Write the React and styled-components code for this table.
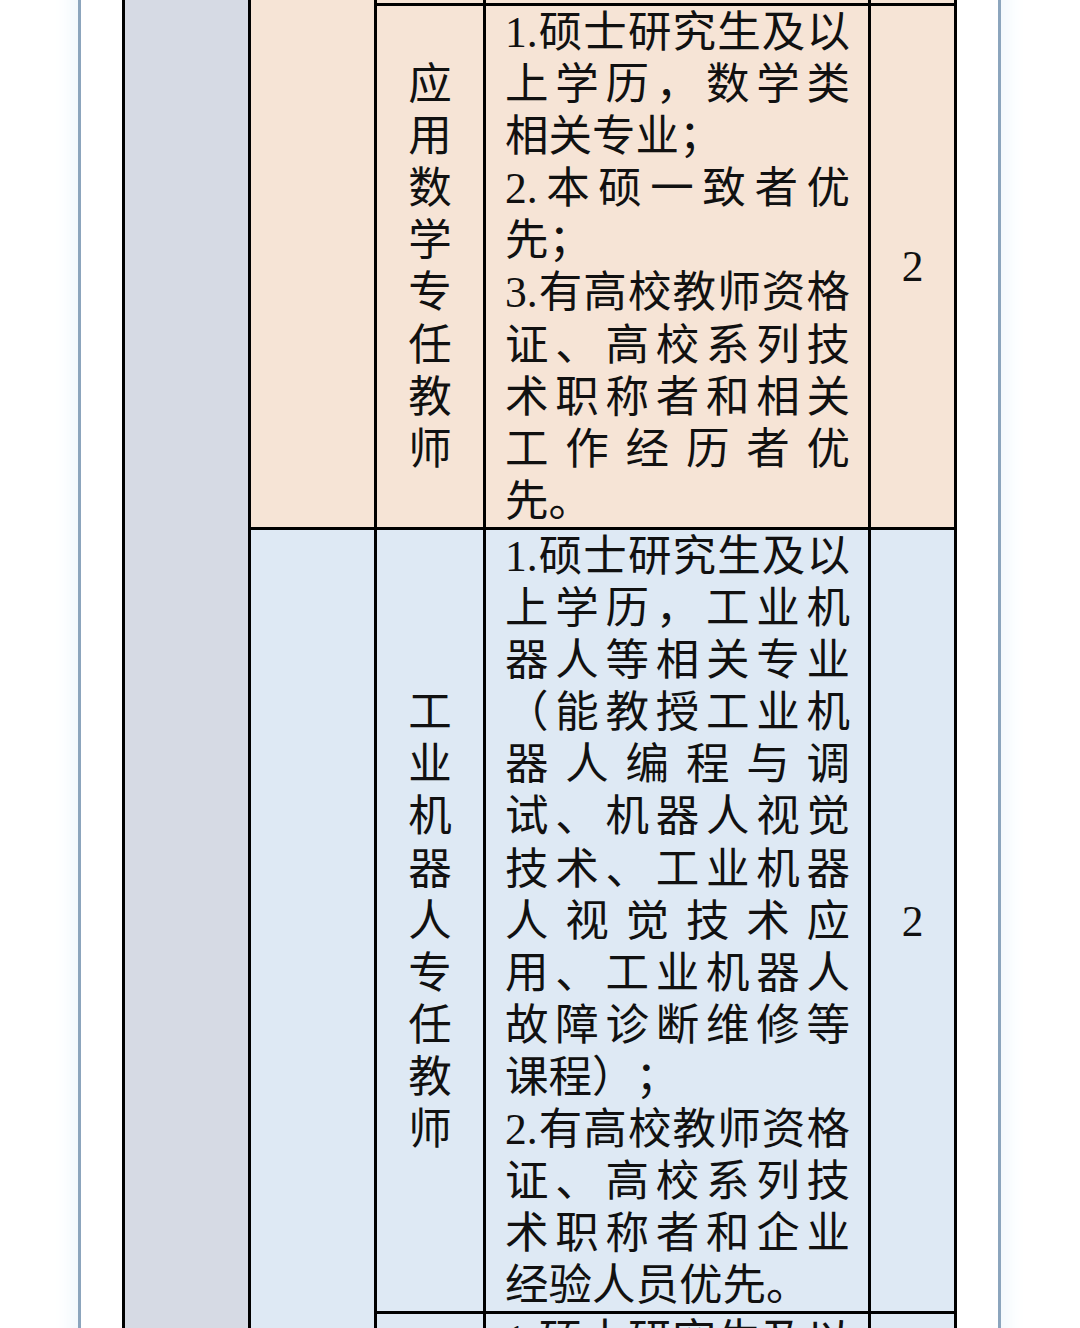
import React from 'react';
import styled, {createGlobalStyle} from 'styled-components';

const GlobalStyle = createGlobalStyle`
  html, body {
    margin: 0;
    padding: 0;
    background: #ffffff;
  }
  body {
    height: 1328px;
    overflow: hidden;
    font-family: "Liberation Serif", "Noto Sans CJK SC", serif;
    color: #111111;
  }
`;

const tones = {
  peach: '#f6e4d6',
  sky: '#dee9f4',
};

const Page = styled.div`
  height: 1328px;
  overflow: hidden;
  background: #ffffff;
`;

const Frame = styled.div`
  box-sizing: border-box;
  margin-left: 78px;
  width: 923px;
  min-height: 1400px;
  padding-left: 41px;
  border-left: 3px solid #8ca5bd;
  border-right: 3px solid #8ca5bd;
  background: #ffffff;
  box-shadow: 0 0 18px 8px #f1f8fd;
`;

const Sheet = styled.div`
  display: grid;
  grid-template-columns: 123px 123px 106px 382px 83px;
  gap: 3px;
  padding: 3px;
  margin-top: -40px;
  width: max-content;
  background: #000000;
  font-size: 43.5px;
  line-height: 52.1px;
`;

const SideCell = styled.div`
  grid-column: 1;
  grid-row: 1 / span 4;
  background: #d6dae4;
`;

const DeptCell = styled.div`
  grid-column: 2;
  grid-row: ${p => p.$row} / span 2;
  background: ${p => tones[p.$tone]};
`;

const BaseCell = styled.div`
  grid-row: ${p => p.$row};
  background: ${p => tones[p.$tone]};
  min-height: ${p => (p.$spacer ? '40px' : '0')};
`;

const TitleCell = styled(BaseCell)`
  grid-column: 3;
  display: flex;
  align-items: center;
  justify-content: center;
`;

const TitleText = styled.span`
  display: inline-block;
  width: 1em;
  text-align: center;
  word-break: break-all;
`;

const ReqCell = styled(BaseCell)`
  grid-column: 4;
  padding: 0 18px 0 19px;
  text-align: justify;
  text-spacing-trim: space-all;
`;

const Para = styled.p`
  margin: 0;
`;

const CountCell = styled(BaseCell)`
  grid-column: 5;
  display: flex;
  align-items: center;
  justify-content: center;
`;

const rows = [
  {tone: 'peach', spacer: true, title: '', reqs: [], count: ''},
  {
    tone: 'peach',
    title: '应用数学专任教师',
    reqs: [
      '1.硕士研究生及以上学历，数学类相关专业；',
      '2.本硕一致者优先；',
      '3.有高校教师资格证、高校系列技术职称者和相关工作经历者优先。',
    ],
    count: '2',
  },
  {
    tone: 'sky',
    title: '工业机器人专任教师',
    reqs: [
      '1.硕士研究生及以上学历，工业机器人等相关专业（能教授工业机器人编程与调试、机器人视觉技术、工业机器人视觉技术应用、工业机器人故障诊断维修等课程）；',
      '2.有高校教师资格证、高校系列技术职称者和企业经验人员优先。',
    ],
    count: '2',
  },
  {
    tone: 'sky',
    title: '',
    reqs: ['1.硕士研究生及以上学历，相关专业；'],
    count: '',
  },
];

export default function App() {
  return (
    <Page lang="zh-CN">
      <GlobalStyle />
      <Frame>
        <Sheet>
          <SideCell />
          <DeptCell $row={1} $tone="peach" />
          <DeptCell $row={3} $tone="sky" />
          {rows.map((row, i) => (
            <React.Fragment key={i}>
              <TitleCell $row={i + 1} $tone={row.tone} $spacer={row.spacer}>
                <TitleText>{row.title}</TitleText>
              </TitleCell>
              <ReqCell $row={i + 1} $tone={row.tone} $spacer={row.spacer}>
                {row.reqs.map((text, j) => (
                  <Para key={j}>{text}</Para>
                ))}
              </ReqCell>
              <CountCell $row={i + 1} $tone={row.tone} $spacer={row.spacer}>
                {row.count}
              </CountCell>
            </React.Fragment>
          ))}
        </Sheet>
      </Frame>
    </Page>
  );
}
